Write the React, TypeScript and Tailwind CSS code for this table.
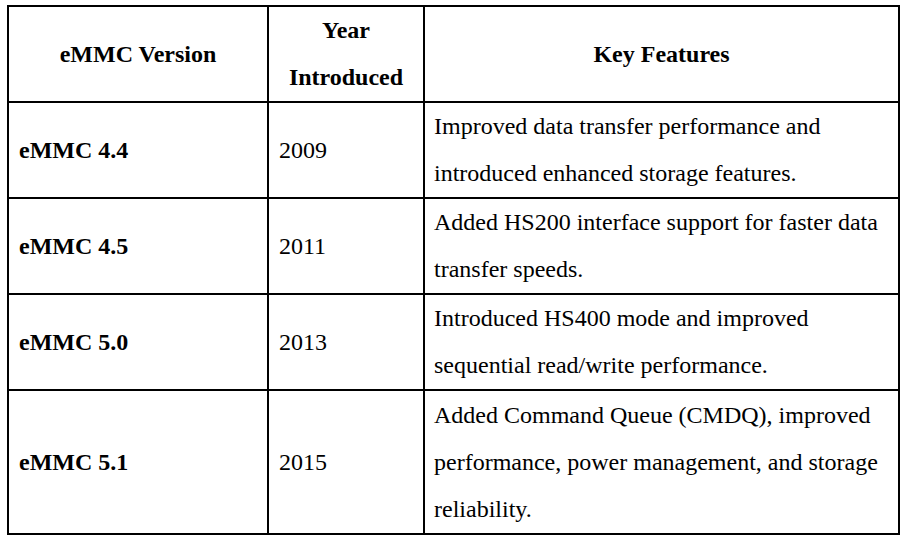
import React from "react";

const rows = [
  { v: "eMMC 4.4", y: "2009", f: ["Improved data transfer performance and", "introduced enhanced storage features."] },
  { v: "eMMC 4.5", y: "2011", f: ["Added HS200 interface support for faster data", "transfer speeds."] },
  { v: "eMMC 5.0", y: "2013", f: ["Introduced HS400 mode and improved", "sequential read/write performance."] },
  { v: "eMMC 5.1", y: "2015", f: ["Added Command Queue (CMDQ), improved", "performance, power management, and storage", "reliability."] },
];

export default function App() {
  return (
    <div className="w-[906px] h-[539px] bg-white pl-[7px] pt-[5px] text-black font-['Liberation_Serif','Times_New_Roman',serif] text-[24px] leading-[47px]">
      <div className="grid w-[893px] grid-cols-[258px_154px_473px] grid-rows-[94px_94px_94px_94px_142px] gap-[2px] bg-black p-[2px]">
        <div className="bg-white flex items-center justify-center font-bold">eMMC Version</div>
        <div className="bg-white flex flex-col items-center justify-center font-bold text-center">
          <span>Year</span>
          <span>Introduced</span>
        </div>
        <div className="bg-white flex items-center justify-center font-bold">Key Features</div>
        {rows.map((r) => (
          <React.Fragment key={r.v}>
            <div className="bg-white flex items-center px-[10px] font-bold">{r.v}</div>
            <div className="bg-white flex items-center px-[10px]">{r.y}</div>
            <div className="bg-white flex flex-col justify-center px-[9px] whitespace-nowrap">
              {r.f.map((l) => (
                <span key={l}>{l}</span>
              ))}
            </div>
          </React.Fragment>
        ))}
      </div>
    </div>
  );
}
